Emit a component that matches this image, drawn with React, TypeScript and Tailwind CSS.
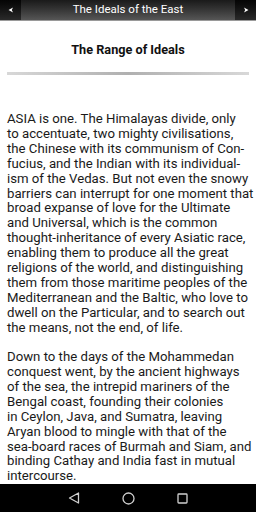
const para1 = [
  "ASIA is one. The Himalayas divide, only",
  "to accentuate, two mighty civilisations,",
  "the Chinese with its communism of Con-",
  "fucius, and the Indian with its individual-",
  "ism of the Vedas. But not even the snowy",
  "barriers can interrupt for one moment that",
  "broad expanse of love for the Ultimate",
  "and Universal, which is the common",
  "thought-inheritance of every Asiatic race,",
  "enabling them to produce all the great",
  "religions of the world, and distinguishing",
  "them from those maritime peoples of the",
  "Mediterranean and the Baltic, who love to",
  "dwell on the Particular, and to search out",
  "the means, not the end, of life.",
];

const para2 = [
  "Down to the days of the Mohammedan",
  "conquest went, by the ancient highways",
  "of the sea, the intrepid mariners of the",
  "Bengal coast, founding their colonies",
  "in Ceylon, Java, and Sumatra, leaving",
  "Aryan blood to mingle with that of the",
  "sea-board races of Burmah and Siam, and",
  "binding Cathay and India fast in mutual",
  "intercourse.",
];

export default function App() {
  return (
    <div className="w-[256px] h-[512px] flex flex-col bg-white overflow-hidden" style={{ fontFamily: "Roboto, 'Liberation Sans', sans-serif" }}>
      <header className="h-[21px] flex shrink-0 border-b border-[#9a9a9a]">
        <button className="w-[21px] h-full flex items-center justify-center bg-gradient-to-b from-[#050505] to-[#2a2a2a]">
          <svg width="6" height="6" viewBox="0 0 6 6"><path d="M5 0.5 L0.5 3 L5 5.5 L3.8 3 Z" fill="#fff" /></svg>
        </button>
        <div className="flex-1 flex items-center justify-center bg-gradient-to-b from-[#1a1a1a] to-[#565656]">
          <span className="text-[11.5px] text-white leading-none">The Ideals of the East</span>
        </div>
        <button className="w-[21px] h-full flex items-center justify-center bg-gradient-to-b from-[#050505] to-[#2a2a2a]">
          <svg width="6" height="6" viewBox="0 0 6 6"><path d="M1 0.5 L5.5 3 L1 5.5 L2.2 3 Z" fill="#fff" /></svg>
        </button>
      </header>
      <main className="flex-1 overflow-hidden">
        <h1 className="pt-[19px] text-center text-[12.7px] font-bold text-[#111] leading-[20px]">The Range of Ideals</h1>
        <div className="mx-[7px] mt-[12px] h-[3px] bg-gradient-to-r from-[#d8d8d8] via-[#b0b0b0] to-[#d8d8d8]" />
        <div className="px-[7px] pt-[37px] text-[13.2px] leading-[14.9px] text-[#1a1a1a] whitespace-nowrap">
          <p>{para1.map((l) => <span key={l} className="block">{l}</span>)}</p>
          <p className="mt-[14.5px]">{para2.map((l) => <span key={l} className="block">{l}</span>)}</p>
        </div>
      </main>
      <nav className="h-[28px] shrink-0 bg-black flex items-center justify-center gap-[42px]">
        <svg width="12" height="12" viewBox="0 0 12 12"><path d="M10.5 1 L1.5 6 L10.5 11 Z" fill="none" stroke="#d0d0d0" strokeWidth="1.3" strokeLinejoin="round" /></svg>
        <svg width="13" height="13" viewBox="0 0 13 13"><circle cx="6.5" cy="6.5" r="5.5" fill="none" stroke="#d0d0d0" strokeWidth="1.3" /></svg>
        <svg width="11" height="11" viewBox="0 0 11 11"><rect x="1" y="1" width="9" height="9" rx="0.8" fill="none" stroke="#d0d0d0" strokeWidth="1.3" /></svg>
      </nav>
    </div>
  );
}
